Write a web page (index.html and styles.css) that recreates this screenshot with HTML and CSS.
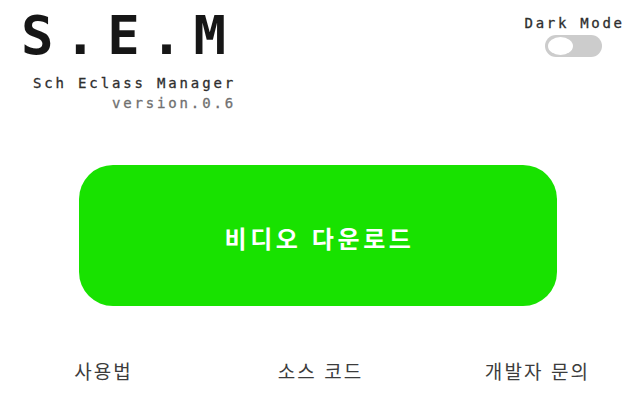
FILE: index.html
```html
<!DOCTYPE html>
<html lang="ko">
<head>
<meta charset="utf-8">
<title>S.E.M</title>
<link rel="stylesheet" href="styles.css">
</head>
<body>
<div class="page">
  <header class="top">
    <div class="brand">
      <div class="title">S.E.M</div>
      <div class="sub">Sch Eclass Manager</div>
      <div class="ver">version.0.6</div>
    </div>
    <div class="mode">
      <div class="mode-label">Dark Mode</div>
      <div class="toggle"><span class="knob"></span></div>
    </div>
  </header>
  <button class="download">비디오 다운로드</button>
  <nav class="links">
    <a class="link">사용법</a>
    <a class="link">소스 코드</a>
    <a class="link">개발자 문의</a>
  </nav>
</div>
</body>
</html>
```
FILE: styles.css
```css
html, body {
  margin: 0;
  padding: 0;
  background: #ffffff;
}
.page {
  width: 640px;
  height: 400px;
  overflow: hidden;
  display: flex;
  flex-direction: column;
}
.top {
  display: flex;
  justify-content: space-between;
  align-items: flex-start;
  padding: 9px 18px 0 20px;
}
.brand {
  display: flex;
  flex-direction: column;
  width: 216px;
  font-family: "DejaVu Sans Mono", monospace;
}
.title {
  font-size: 54px;
  line-height: 54px;
  font-weight: 700;
  letter-spacing: 10.6px;
  padding-left: 1px;
  color: #161616;
  white-space: nowrap;
}
.sub, .ver {
  font-size: 14px;
  line-height: 20px;
  letter-spacing: 2.85px;
  text-align: right;
  white-space: nowrap;
  -webkit-text-stroke: 0.3px currentColor;
}
.sub {
  margin-top: 10px;
  color: #2e2e2e;
}
.ver {
  color: #707070;
}
.mode {
  display: flex;
  flex-direction: column;
  align-items: center;
  padding-top: 4px;
}
.mode-label {
  font-family: "DejaVu Sans Mono", monospace;
  font-size: 14px;
  line-height: 20px;
  letter-spacing: 2.7px;
  margin-right: -2.7px;
  color: #2e2e2e;
  -webkit-text-stroke: 0.3px currentColor;
}
.toggle {
  margin-top: 2px;
  width: 57px;
  height: 22px;
  border-radius: 11px;
  background: #cccccc;
  display: flex;
  align-items: center;
  padding-left: 3px;
  box-sizing: border-box;
}
.knob {
  width: 25px;
  height: 18px;
  border-radius: 50%;
  background: #ffffff;
}
.download {
  margin: 52px 0 0 79px;
  width: 478px;
  height: 141px;
  border: none;
  border-radius: 34px;
  background: #18e200;
  color: #ffffff;
  font-family: "Noto Sans CJK KR", sans-serif;
  font-weight: 700;
  font-size: 24px;
  letter-spacing: 3.6px;
  padding: 4px 0 0 3px;
}
.links {
  margin: 53px -6px 0 -5px;
  display: grid;
  grid-template-columns: 1fr 1fr 1fr;
}
.link {
  text-align: center;
  font-family: "Noto Sans CJK KR", sans-serif;
  font-size: 19px;
  line-height: 24px;
  letter-spacing: 2.1px;
  color: #3c3c3c;
}
```
